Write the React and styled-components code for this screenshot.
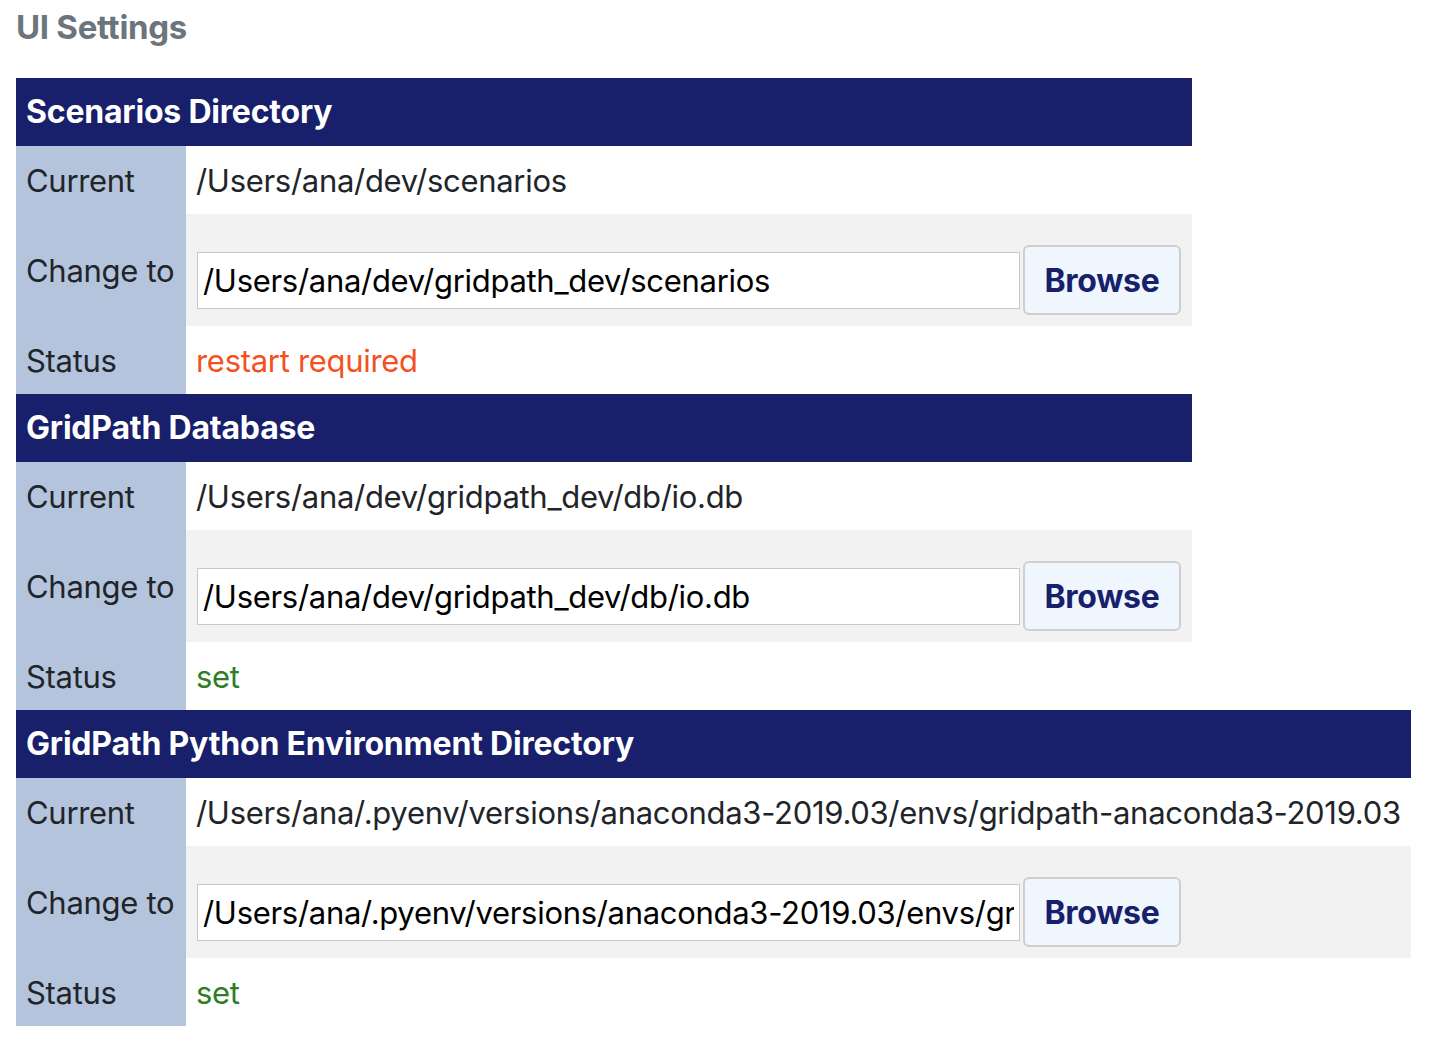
import React from 'react';
import styled, { createGlobalStyle } from 'styled-components';

const GlobalStyle = createGlobalStyle`
  body {
    margin: 0;
    background: #ffffff;
    font-family: Inter, "Noto Sans", "Liberation Sans", sans-serif;
    color: #212529;
  }
`

const Page = styled.div`
  padding: 7px 16px 0 16px;
`

const Title = styled.h1`
  margin: 0 0 30px 0;
  font-size: 33px;
  line-height: 41px;
  font-weight: 700;
  letter-spacing: -0.3px;
  color: #6c757d;
`

const SettingsTable = styled.table`
  border-collapse: collapse;
  border-spacing: 0;
  font-size: 31px;
  line-height: 48px;
  letter-spacing: -0.3px;
`

const HeaderCell = styled.th`
  background-color: #181f6b;
  color: #ffffff;
  font-size: 32px;
  font-weight: 700;
  letter-spacing: -0.2px;
  text-align: left;
  padding: 10px 10px;
  white-space: nowrap;
`

const Row = styled.tr`
  background-color: ${(p) => (p.shaded ? '#f2f2f2' : '#ffffff')};
`

const LabelCell = styled.td`
  width: 160px;
  background-color: #b4c4dc;
  padding: 11px 0 9px 10px;
  vertical-align: middle;
  white-space: nowrap;
`

const ValueCell = styled.td`
  padding: ${(p) => (p.form ? '31px 11px 11px 11px' : '11px 10px 9px 10px')};
  vertical-align: middle;
  white-space: nowrap;
  color: ${(p) => p.color || '#212529'};
`

const FormLine = styled.div`
  display: flex;
  align-items: center;
  gap: 3px;
`

const PathInput = styled.input`
  box-sizing: border-box;
  width: 823px;
  height: 57px;
  padding: 0 5px;
  border: 1px solid #c8c8c8;
  background: #ffffff;
  font-family: Inter, "Noto Sans", "Liberation Sans", sans-serif;
  font-size: 31px;
  letter-spacing: -0.3px;
  color: #000000;
  outline: none;
`

const BrowseButton = styled.button`
  box-sizing: border-box;
  width: 158px;
  height: 70px;
  border: 2px solid #cfcfcf;
  border-radius: 6px;
  background-color: #eff6fe;
  color: #181f6b;
  font-family: Inter, "Noto Sans", "Liberation Sans", sans-serif;
  font-size: 32px;
  font-weight: 700;
  letter-spacing: -0.3px;
  cursor: pointer;
`

const sections = [
  {
    title: 'Scenarios Directory',
    current: '/Users/ana/dev/scenarios',
    change: '/Users/ana/dev/gridpath_dev/scenarios',
    status: 'restart required',
    ok: false,
  },
  {
    title: 'GridPath Database',
    current: '/Users/ana/dev/gridpath_dev/db/io.db',
    change: '/Users/ana/dev/gridpath_dev/db/io.db',
    status: 'set',
    ok: true,
  },
  {
    title: 'GridPath Python Environment Directory',
    current: '/Users/ana/.pyenv/versions/anaconda3-2019.03/envs/gridpath-anaconda3-2019.03',
    change: '/Users/ana/.pyenv/versions/anaconda3-2019.03/envs/gridpath-anaconda3-2019.03',
    status: 'set',
    ok: true,
  },
]

const SettingSection = ({ section }) => {
  return (
    <SettingsTable>
      <thead>
        <tr>
          <HeaderCell colSpan={2}>{section.title}</HeaderCell>
        </tr>
      </thead>
      <tbody>
        <Row>
          <LabelCell>Current</LabelCell>
          <ValueCell>{section.current}</ValueCell>
        </Row>
        <Row shaded>
          <LabelCell>Change to</LabelCell>
          <ValueCell form>
            <FormLine>
              <PathInput type="text" defaultValue={section.change} />
              <BrowseButton>Browse</BrowseButton>
            </FormLine>
          </ValueCell>
        </Row>
        <Row>
          <LabelCell>Status</LabelCell>
          <ValueCell color={section.ok ? '#2e7d1f' : '#f4511e'}>{section.status}</ValueCell>
        </Row>
      </tbody>
    </SettingsTable>
  )
}

const App = () => {
  return (
    <Page>
      <GlobalStyle />
      <Title>UI Settings</Title>
      {sections.map((s) => (
        <SettingSection key={s.title} section={s} />
      ))}
    </Page>
  )
}

export default App
